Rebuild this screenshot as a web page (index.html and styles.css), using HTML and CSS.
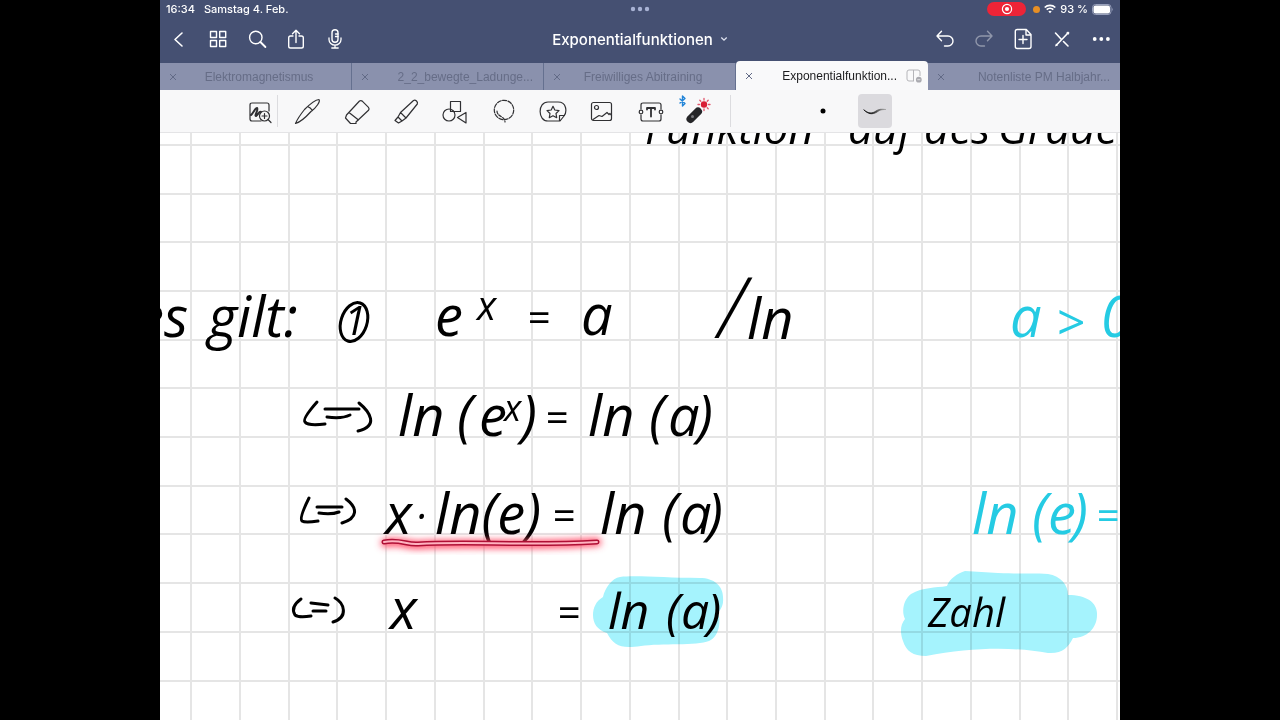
FILE: index.html
```html
<!DOCTYPE html>
<html lang="de">
  <head>
    <meta charset="UTF-8" />
    <meta name="viewport" content="width=device-width, initial-scale=1.0" />
    <title>Exponentialfunktionen</title>
    <link rel="stylesheet" href="styles.css">
  </head>
  <body>
    <div class="app">
      <header class="header">
        <div class="status">
          <div class="status-left"><span>16:34</span><span>Samstag 4. Feb.</span></div>
          <svg class="status-dots" width="20" height="6" viewBox="0 0 20 6"><circle cx="3" cy="3" r="2.2"/><circle cx="10" cy="3" r="2.2"/><circle cx="17" cy="3" r="2.2"/></svg>
          <div class="status-right">
            <span class="record"><svg width="12" height="12" viewBox="0 0 12 12"><circle cx="6" cy="6" r="4.6" fill="none" stroke="#fff" stroke-width="1.2"/><circle cx="6" cy="6" r="2.1" fill="#fff"/></svg></span>
            <span class="mic-dot"></span>
            <svg width="12" height="10" viewBox="0 0 12 10" fill="none" stroke="#fff" stroke-width="1.7"><path d="M.7 3.5a7.6 7.6 0 0 1 10.6 0M2.7 5.7a4.7 4.7 0 0 1 6.6 0"/><path d="M6 9.3 4.3 7.6a2.4 2.4 0 0 1 3.4 0z" fill="#fff" stroke="none"/></svg>
            <span>93 %</span>
            <svg width="22" height="11" viewBox="0 0 22 11"><rect x=".5" y=".5" width="18.500" height="10" rx="3" fill="none" stroke="#98a0bb"/><rect x="1.500" y="1.500" width="16.500" height="8" rx="2" fill="#fff"/><path d="M20.300 3.800q1.600 1.700 0 3.400z" fill="#98a0bb"/></svg>
          </div>
        </div>
        <nav class="nav">
          <div class="nav-group">
            <button aria-label="Zurück"><svg viewBox="0 0 24 24"><path d="m15 6-7 6.500 7 6.500" stroke-width="1.600"/></svg></button>
            <button aria-label="Übersicht"><svg viewBox="0 0 24 24"><path d="M4.500 4.500h6v6h-6zM13.700 4.500h6v6h-6zM4.500 13.500h6v6h-6zM13.700 13.500h6v6h-6z"/></svg></button>
            <button aria-label="Suchen"><svg viewBox="0 0 24 24"><circle cx="10.800" cy="10.500" r="6.200"/><path d="m15.400 15 5 5" stroke-width="1.800"/></svg></button>
            <button aria-label="Teilen"><svg viewBox="0 0 24 24"><path d="M9 9H6.500Q4.700 9 4.700 10.800v8.400Q4.700 21 6.500 21h11q1.800 0 1.800-1.800v-8.400Q19.300 9 17.500 9H15M12 15.500V3.300M8.500 6.700 12 3.200l3.500 3.500"/></svg></button>
            <button aria-label="Aufnahme"><svg viewBox="0 0 24 24"><rect x="9" y="2.800" width="6" height="12.500" rx="3"/><path d="M6 11v1.500a6 5.700 0 0 0 12 0V11M12 18.200v2.800M8.800 21h6.400M12.500 7H15M12.500 9.500H15" stroke-width="1.300"/></svg></button>
          </div>
          <button class="title">Exponentialfunktionen <svg width="8" height="6" viewBox="0 0 8 6"><path d="m1.300 1.500 2.700 2.700 2.700-2.700" fill="none" stroke="#dfe3f0" stroke-width="1.300"/></svg></button>
          <div class="nav-group nav-end">
            <button aria-label="Rückgängig"><svg viewBox="0 0 24 24"><path d="M8.500 4.300 4 9l4.500 4.700M4.300 9H15a5 5 0 0 1 0 10h-3.500"/></svg></button>
            <button class="faded" aria-label="Wiederholen"><svg viewBox="0 0 24 24"><path d="M15.500 4.300 20 9l-4.500 4.700M19.700 9H9a5 5 0 0 0 0 10h3.500"/></svg></button>
            <button aria-label="Seite hinzufügen"><svg viewBox="0 0 24 24"><path d="M6.300 2.500h9l4.700 5v12q0 2-2 2H6.300q-2 0-2-2v-15q0-2 2-2zM15 2.700V8h5M12 8.500v8M8 12.500h8"/></svg></button>
            <button aria-label="Werkzeuge"><svg viewBox="0 0 24 24"><path d="m5.500 6 5.500 6M13.500 14.500l4.500 4.500M6.500 18 17.500 6.500" stroke-width="1.600"/><path d="m5 19.500 1-3 2 2zM16 6l2-1.500 1.500 1.300-1 2z" fill="#fff" stroke="none"/></svg></button>
            <button aria-label="Mehr"><svg viewBox="0 0 24 24"><g fill="#fff" stroke="none"><circle cx="5.700" cy="12" r="1.900"/><circle cx="12.300" cy="12" r="1.900"/><circle cx="18.900" cy="12" r="1.900"/></g></svg></button>
          </div>
        </nav>
      </header>

      <div class="tabs">
        <div class="tab"><button aria-label="Schließen"><svg viewBox="0 0 8 8"><path d="m1 1 6 6M7 1 1 7"/></svg></button><a href="#">Elektromagnetismus</a></div>
        <div class="tab tab-long"><button aria-label="Schließen"><svg viewBox="0 0 8 8"><path d="m1 1 6 6M7 1 1 7"/></svg></button><a href="#">2_2_bewegte_Ladunge...</a></div>
        <div class="tab"><button aria-label="Schließen"><svg viewBox="0 0 8 8"><path d="m1 1 6 6M7 1 1 7"/></svg></button><a href="#">Freiwilliges Abitraining</a></div>
        <div class="tab tab-long active"><button aria-label="Schließen"><svg viewBox="0 0 8 8"><path d="m1 1 6 6M7 1 1 7"/></svg></button><a href="#">Exponentialfunktion...</a>
          <svg class="split" width="16" height="14" viewBox="0 0 16 14"><path d="M8 12H3q-2 0-2-2V3q0-2 2-2h9q2 0 2 2v4M7.500 1v11" fill="none" stroke="#b5b5b9"/><circle cx="12.800" cy="10.700" r="2.900" fill="#aaaab0"/><path d="M11.300 10.700h3" stroke="#eee" stroke-width=".8"/></svg>
        </div>
        <div class="tab tab-long"><button aria-label="Schließen"><svg viewBox="0 0 8 8"><path d="m1 1 6 6M7 1 1 7"/></svg></button><a href="#">Notenliste PM Halbjahr...</a></div>
      </div>

      <div class="tools">
        <button class="zoom-tool" aria-label="Zoomfenster"><svg viewBox="0 0 28 28"><path d="M15 24H6q-2 0-2-2V8q0-2 2-2h15q2 0 2 2v6"/><path d="M5 18c2-1 4-7 6-7 2 1-3 8-1 8 2-1 3-5 5-4" stroke-width="2"/><circle cx="18.500" cy="19" r="5" fill="#f8f8f8"/><path d="M18.500 16.500v5M16 19h5M22 22.500l3 3"/></svg></button>
        <span class="divider"></span>
        <div class="tool-list">
          <button aria-label="Stift"><svg viewBox="0 0 28 28"><path d="M1.500 26.500c2-5 5-9 9-14C15 8 20 3 25 2.500c1.500 2-2.500 8-8 12C12 20 7 25 1.500 26.500zM13.500 9.500q3 1 5 4"/></svg></button>
          <button aria-label="Radierer"><svg viewBox="0 0 28 28"><path d="M3.500 18 16.500 4q1.500-1 3 .3l6 6q1.200 1.500 0 3L13 25M3.500 18l-1 3 5 5.500H13V25M6 15.500l9.500 7.500"/></svg></button>
          <button aria-label="Textmarker"><svg viewBox="0 0 28 28"><path d="m8.500 15.500 13-12q1.500-.8 3 .5 1.500 1.500.8 3L14 21zM8.500 15.500l-2.500 4.500 4 4 4-3M6 20l-3 3.500 3.500 2.500 3.500-2"/></svg></button>
          <button aria-label="Formen"><svg viewBox="0 0 28 28"><path d="M9.500 4.500h10v10h-10zM25 15.500v10.500l-8.500-5.500z"/><circle cx="8" cy="18" r="6"/></svg></button>
          <button aria-label="Lasso"><svg viewBox="0 0 28 28"><circle cx="14" cy="13" r="9.700" stroke-dasharray="4 1.500"/><path d="M7 14c0 6 8 5 8 11" stroke-dasharray="3 1.500"/></svg></button>
          <button aria-label="Elemente"><svg viewBox="0 0 28 28"><path d="M21 24H9C-1.500 24-1.500 5 9 5h10c9 0 9 10 6 14l-4 5zM20.500 23.500v-5h5M14 9.300l1.800 3.700 4.200.6-3 2.900.7 4.200-3.700-2-3.700 2 .7-4.200-3-2.900 4.200-.6z"/></svg></button>
          <button aria-label="Bild"><svg viewBox="0 0 28 28"><rect x="3.500" y="5.500" width="20" height="18" rx="2"/><circle cx="8.500" cy="10.500" r="2"/><path d="m5 22.500 6-4 3 1 5-4 2 2 1-1 1.500 2"/></svg></button>
          <button aria-label="Text"><svg viewBox="0 0 28 28"><path d="M4 12V8q0-2 2-2h16q2 0 2 2v4M24 18v4q0 2-2 2H6q-2 0-2-2v-4"/><circle cx="4" cy="15" r="1.800"/><circle cx="24" cy="15" r="1.800"/><path d="M10 12.500V11h8v1.500M14 11v8.500" stroke-width="1.800"/></svg></button>
          <button class="laser-tool" aria-label="Laserpointer"><svg viewBox="0 0 36 32"><path d="m5 4 5 4.500L7.500 11V1L10 3.500 5 8" stroke="#2385d8" stroke-width="1.400"/><path d="m15.500 24 7.500-7.500" stroke="#252528" stroke-width="8" /><circle cx="17.500" cy="21.500" r="1.500" fill="#77777c" stroke="none"/><circle cx="29" cy="9.500" r="3.200" fill="#d91e36" stroke="none"/><path d="M29 3.500v1.500M29 14v1.500M23 9.500h1.500M33.500 9.500h1.500M24.800 5.300l1 1M33.200 5.300l-1 1M33.200 13.700l-1-1" stroke="#e1546a" stroke-width="1.300"/></svg></button>
        </div>
        <span class="divider"></span>
        <div class="styles">
          <button aria-label="Punkt"><svg viewBox="0 0 28 28"><circle cx="14" cy="14" r="2.500" fill="#000" stroke="none"/></svg></button>
          <button class="selected" aria-label="Linie"><svg viewBox="0 0 28 28"><defs><linearGradient id="fade"><stop offset=".3" stop-color="#111"/><stop offset="1" stop-color="#aaa"/></linearGradient></defs><path d="M3 13c4 3.500 8 4 12 1 3-2 5-2 10-1.500-5 0-6 .5-9 2.500-5 3-9 2-13-2z" fill="url(#fade)" stroke="url(#fade)" stroke-width=".8"/></svg></button>
        </div>
      </div>

      <main class="page">
        <svg class="sheet" viewBox="0 0 960 587" preserveAspectRatio="xMinYMin slice">
          <defs>
            <filter id="glow" x="-10%" y="-300%" width="120%" height="700%"><feGaussianBlur stdDeviation="3.500"/></filter>
          </defs>
          <path class="grid" d="M31 0V587M80 0V587M129 0V587M177 0V587M226 0V587M275 0V587M324 0V587M372 0V587M421 0V587M470 0V587M519 0V587M567 0V587M616 0V587M665 0V587M713 0V587M762 0V587M811 0V587M860 0V587M908 0V587M957 0V587M0 12H960M0 61H960M0 109H960M0 158H960M0 207H960M0 255H960M0 304H960M0 353H960M0 401H960M0 450H960M0 499H960M0 548H960"/>

          <!-- Textmarker -->
          <g class="marker">
            <path d="M460 444c16-2 45 1 80 1 14 0 23 8 23 19 1 9-3 13-5 16 3 7 2 23-9 28-12 5-48 2-68 5-20 3-27 0-34-13-10-3-14-10-14-18 0-7 3-14 10-18 2-9 9-19 17-20z"/>
            <path d="M805 438c-7 2-16 8-18 15-12 2-24 1-36 8-7 5-10 17-6 25-5 6-5 14-2 22 3 10 10 15 23 15 46-9 90-9 122-3 14 1 20-5 25-15 14 0 24-10 24-23 1-12-10-20-29-20 0-10-7-19-20-21-10-1-25 0-50-1z"/>
          </g>

          <g class="ink">
            <text class="top" x="485" y="11">Funktion</text>
            <text class="top" x="688" y="11">auf</text>
            <text class="top" x="764" y="11">des</text>
            <text class="top" x="838" y="11">Grade</text>

            <text x="-24" y="204">es</text>
            <text x="48" y="204">gilt:</text>
            <text class="small" x="184" y="202">1</text>
            <ellipse cx="194" cy="189" rx="13" ry="20" transform="rotate(18 194 189)"/>
            <text x="275" y="203">e</text>
            <text class="small" x="317" y="187">x</text>
            <text class="small" x="367" y="199">=</text>
            <text x="421" y="202">a</text>
            <text class="slash" x="558" y="205">/</text>
            <text x="587" y="206">ln</text>

            <path d="M157 269q-15 17-12 20 3 4 20 2M165 276h34M167 284q15 2 23-2M199 270c11 9 20 23-1 28"/>
            <text x="238" y="303">ln</text>
            <text x="297" y="303">(</text>
            <text x="319" y="303">e</text>
            <text class="sup" x="344" y="288">x</text>
            <text x="361" y="303">)</text>
            <text class="small" x="385" y="299">=</text>
            <text x="428" y="303">ln</text>
            <text x="489" y="303">(</text>
            <text x="508" y="303">a</text>
            <text x="537" y="303">)</text>

            <path d="M149 365q-10 20-7 23 3 2 16 0M157 374h25M159 380q12 2 20-1M186 366c12 9 12 19-4 24"/>
            <text x="225" y="401">x</text>
            <text class="small" x="256" y="397">·</text>
            <text x="275" y="401">ln(e)</text>
            <text class="small" x="392" y="397">=</text>
            <text x="440" y="401">ln</text>
            <text x="502" y="401">(</text>
            <text x="520" y="401">a</text>
            <text x="547" y="401">)</text>

            <path d="M141 466q-11 8-6 16 4 3 16 1M151 470l17 2M153 478h13M175 465c9 5 14 19-2 24"/>
            <text x="230" y="496">x</text>
            <text class="small" x="397" y="494">=</text>
            <text class="medium" x="448" y="496">ln</text>
            <text class="medium" x="506" y="496">(</text>
            <text class="medium" x="521" y="496">a</text>
            <text class="medium" x="547" y="496">)</text>
            <text class="small" x="768" y="494">Zahl</text>
          </g>

          <g class="ink cyan">
            <text x="850" y="204">a</text>
            <text class="medium" x="896" y="207">&gt;</text>
            <text x="941" y="204">0</text>
            <text x="812" y="401">ln</text>
            <text x="872" y="401">(</text>
            <text x="888" y="401">e</text>
            <text x="912" y="401">)</text>
            <text class="small" x="936" y="397">=</text>
          </g>

          <!-- Laserpointer-Linie -->
          <g class="laser">
            <path class="laser-glow" d="M225 410c16-3 23 3 34 2 52-3 108 2 178-3"/>
            <path class="laser-edge" d="M224 409c16-3 23 3 34 2 52-3 108 2 179-2"/>
            <path class="laser-core" d="M224 409c16-3 23 3 34 2 52-3 108 2 179-2"/>
          </g>
        </svg>
      </main>
    </div>
  </body>
</html>
```
FILE: styles.css
```css
* {
  box-sizing: border-box;
}

body {
  margin: 0;
  background-color: #000;
  font-family: Inter, "Liberation Sans", sans-serif;
}

button {
  display: flex;
  align-items: center;
  justify-content: center;
  margin: 0;
  padding: 0;
  border: 0;
  background: none;
  color: inherit;
  font: inherit;
}

a {
  color: inherit;
  text-decoration: none;
}

.app {
  display: flex;
  flex-direction: column;
  height: 100vh;
  aspect-ratio: 4 / 3;
  margin: 0 auto;
  overflow: hidden;
  background-color: #fff;
}

.header {
  background-color: #455072;
  color: #fff;
}

.status {
  display: grid;
  grid-template-columns: 1fr auto 1fr;
  align-items: center;
  height: 18px;
  padding: 0 6px;
  font-size: 11px;
  font-weight: 500;
}

.status-left {
  display: flex;
  gap: 9px;
}

.status-dots {
  fill: #a9b3d4;
}

.status-right {
  display: flex;
  align-items: center;
  justify-content: flex-end;
  gap: 4px;
}

.record {
  display: flex;
  align-items: center;
  justify-content: center;
  width: 39px;
  height: 14px;
  margin-right: 3px;
  border-radius: 7px;
  background-color: #ed2437;
}

.mic-dot {
  width: 7px;
  height: 7px;
  border-radius: 50%;
  background-color: #e88f24;
}

.nav {
  display: grid;
  grid-template-columns: 1fr auto 1fr;
  align-items: center;
  height: 45px;
  padding: 0 7px 3px;
}

.nav-group {
  display: flex;
  gap: 15px;
}

.nav-end {
  justify-content: flex-end;
}

.nav-group svg {
  width: 24px;
  height: 24px;
  fill: none;
  stroke: #fff;
  stroke-width: 1.4;
  stroke-linecap: round;
  stroke-linejoin: round;
}

.faded {
  opacity: 0.4;
}

.title {
  gap: 7px;
  font-size: 15px;
  font-weight: 500;
}

.tabs {
  display: flex;
  height: 27px;
  background-color: #455072;
}

.tab {
  display: flex;
  flex: 0 0 20%;
  align-items: center;
  padding: 0 10px 0 9px;
  border-right: 1px solid #65708f;
  background-color: #8a91ad;
  color: #666d87;
  font-family: "Liberation Sans", sans-serif;
  font-size: 12px;
  white-space: nowrap;
}

.tab:last-child {
  border-right: 0;
}

.tab a {
  flex: 1;
  text-align: center;
}

.tab-long a {
  text-align: right;
}

.tab button svg {
  width: 8px;
  height: 8px;
  fill: none;
  stroke: #626a86;
}

.tab.active {
  margin-top: -2px;
  padding-right: 6px;
  border: 0;
  border-radius: 4px 4px 0 0;
  background-color: #f9f9fa;
  color: #1c1c1e;
}

.split {
  margin-left: 9px;
}

.tools {
  display: flex;
  align-items: center;
  height: 43px;
  padding-left: 86px;
  border-bottom: 1px solid #e4e4e6;
  background-color: #f8f8f9;
}

.tools svg {
  width: 28px;
  height: 28px;
  fill: none;
  stroke: #303033;
  stroke-width: 1.2;
  stroke-linecap: round;
  stroke-linejoin: round;
}

.tools .laser-tool svg {
  width: 36px;
  height: 32px;
}

.divider {
  width: 1px;
  height: 32px;
  margin: 0 5px 0 3px;
  background-color: #dcdcdf;
}

.tool-list {
  display: flex;
  padding-right: 3px;
}

.tool-list button {
  width: 49px;
  height: 34px;
}

.tool-list .laser-tool {
  justify-content: flex-start;
}

.styles {
  display: flex;
  gap: 18px;
  margin-left: 70px;
}

.styles button {
  width: 34px;
  height: 34px;
  border-radius: 4px;
}

.styles .selected {
  background-color: #dbdade;
}

.page {
  flex: 1;
  min-height: 0;
}

.sheet {
  display: block;
  width: 100%;
  height: 100%;
}

.grid {
  stroke: #000;
  stroke-opacity: 0.1;
  stroke-width: 2;
}

.marker {
  fill: #a5f3fd;
  mix-blend-mode: multiply;
}

.ink {
  fill: none;
  stroke: #000;
  stroke-width: 3;
  stroke-linecap: round;
  stroke-linejoin: round;
}

.ink text {
  fill: #000;
  stroke: none;
  font-family: "Open Sans", "Noto Sans", sans-serif;
  font-size: 56px;
  font-style: italic;
  font-weight: 400;
}

.ink.cyan text {
  fill: #25cbe3;
}

.ink .top {
  font-size: 44px;
  font-weight: 500;
}

.ink .medium {
  font-size: 50px;
}

.ink .small {
  font-size: 40px;
}

.ink .sup {
  font-size: 36px;
}

.ink .slash {
  font-size: 84px;
  font-weight: 300;
}

.laser {
  fill: none;
  stroke-linecap: round;
}

.laser-glow {
  stroke: #ff4763;
  stroke-width: 8;
  filter: url(#glow);
}

.laser-edge {
  stroke: #b00f35;
  stroke-width: 5;
}

.laser-core {
  stroke: #ffb3c0;
  stroke-width: 2;
}
```
